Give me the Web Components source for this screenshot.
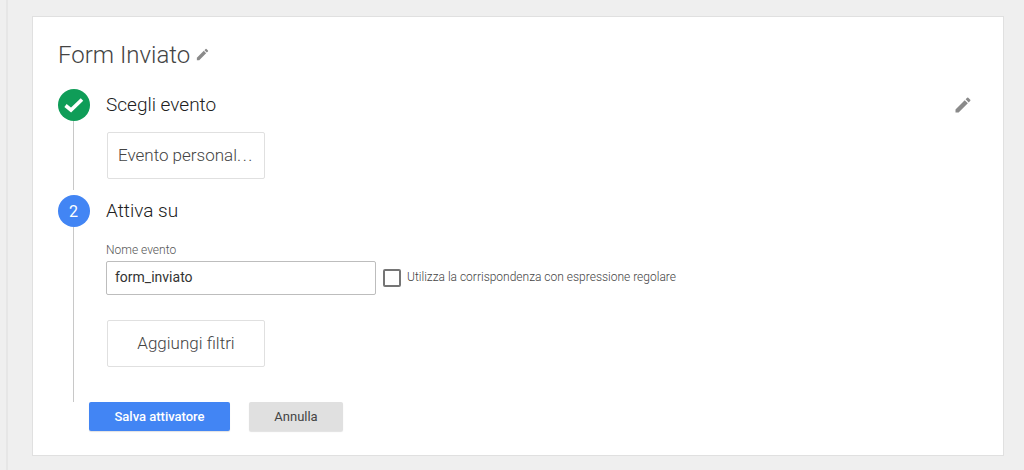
<!DOCTYPE html>
<html>
<head>
<meta charset="utf-8">
<style>
  html, body { margin: 0; height: 100%; background: #efefef; overflow: hidden; }
  body { font-family: Roboto, "Liberation Sans", sans-serif; }
</style>
</head>
<body>
<trigger-page>
  <trigger-step number="check" title="Scegli evento" editable>
    <chip-button>Evento personal<span style="letter-spacing:1.6px">...</span></chip-button>
  </trigger-step>
  <trigger-step number="2" title="Attiva su" last>
    <event-field></event-field>
    <chip-button class="filters">Aggiungi filtri</chip-button>
  </trigger-step>
</trigger-page>

<script>
const PENCIL = `<svg viewBox="0 0 24 24"><path fill="currentColor" d="M3 17.25V21h3.75L17.81 9.94l-3.75-3.75L3 17.25zM20.71 7.04a1 1 0 0 0 0-1.41l-2.34-2.34a1 1 0 0 0-1.41 0l-1.83 1.83 3.75 3.75 1.83-1.83z"/></svg>`;

class TriggerPage extends HTMLElement {
    connectedCallback() {
        this.attachShadow({ mode: 'open' });
        this.shadowRoot.innerHTML = `
            <style>
                :host {
                    display: block; height: 470px; box-sizing: border-box; padding: 16px 20px 14px 32px;
                    background: linear-gradient(#e6e6e6, #e6e6e6) 6px 0 / 2px 100% no-repeat;
                }
                .card {
                    box-sizing: border-box; height: 440px; background: #fff;
                    border: 1px solid #e0e0e0; padding: 22px 25px 0 25px;
                }
                h1 {
                    margin: 0 0 18px; display: flex; align-items: center; gap: 5px; height: 32px;
                    font: 300 24px Roboto, sans-serif; color: #444;
                }
                h1 svg { width: 15px; height: 15px; color: #8a8a8a; margin-top: -1px; }
                .actions { display: flex; gap: 19px; margin-left: 31px; }
                .btn {
                    box-sizing: border-box; height: 29px; border-radius: 2px;
                    display: flex; align-items: center; justify-content: center;
                    font: 500 13px Roboto, sans-serif; box-shadow: 0 1px 1px rgba(0,0,0,.12);
                }
                .save { width: 141px; background: #4285f4; color: #fff; }
                .cancel { width: 94px; background: #e0e0e0; color: #444; font-weight: 400; }
            </style>
            <div class="card">
                <h1>Form Inviato ${PENCIL}</h1>
                <slot></slot>
                <div class="actions">
                    <div class="btn save">Salva attivatore</div>
                    <div class="btn cancel">Annulla</div>
                </div>
            </div>
        `;
    }
}
customElements.define('trigger-page', TriggerPage);

class TriggerStep extends HTMLElement {
    connectedCallback() {
        const num = this.getAttribute('number');
        const done = num === 'check';
        this.attachShadow({ mode: 'open' });
        this.shadowRoot.innerHTML = `
            <style>
                :host { display: grid; grid-template-columns: 32px 1fr; column-gap: 16px; }
                .rail { display: flex; flex-direction: column; }
                .badge {
                    width: 32px; height: 32px; border-radius: 50%; flex: none;
                    display: flex; align-items: center; justify-content: center;
                    color: #fff; font: 400 16px Roboto, sans-serif;
                    background: ${done ? '#0f9d58' : '#4285f4'};
                }
                .badge span { margin-right: 1px; }
                .badge svg { width: 32px; height: 32px; }
                .line { flex: 1; width: 1px; background: #c8c8c8; margin: ${done ? '0 0 5px 15px' : '0 0 0 15px'}; }
                .head {
                    box-sizing: border-box; height: 32px; padding-bottom: 2px;
                    display: flex; align-items: center; justify-content: space-between;
                    font: 300 19px Roboto, sans-serif; color: #212121;
                }
                .edit { display: flex; width: 20px; height: 20px; color: #8a8a8a; margin: 2px 5px 0 0; }
                .body { padding: ${done ? '11px 0 16px' : '15px 0 35px'}; }
            </style>
            <div class="rail">
                <div class="badge">${done ? '<svg viewBox="0 0 32 32"><path fill="none" stroke="currentColor" stroke-width="3.6" d="M7.5 16.5l5.5 4.5 11-10.5"/></svg>' : `<span>${num}</span>`}</div>
                <div class="line"></div>
            </div>
            <div>
                <div class="head"><span>${this.getAttribute('title')}</span>${this.hasAttribute('editable') ? `<span class="edit">${PENCIL}</span>` : ''}</div>
                <div class="body"><slot></slot></div>
            </div>
        `;
    }
}
customElements.define('trigger-step', TriggerStep);

class ChipButton extends HTMLElement {
    connectedCallback() {
        this.attachShadow({ mode: 'open' });
        this.shadowRoot.innerHTML = `
            <style>
                :host {
                    display: flex; align-items: center; justify-content: center; box-sizing: border-box;
                    width: 158px; height: 47px; margin-left: 1px; padding-bottom: 2px;
                    border: 1px solid #e0e0e0; border-radius: 2px; background: #fff;
                    font: 300 17px Roboto, sans-serif; color: #444; white-space: nowrap;
                }
                :host(.filters) { margin-top: 25px; }
            </style>
            <span><slot></slot></span>
        `;
    }
}
customElements.define('chip-button', ChipButton);

class EventField extends HTMLElement {
    connectedCallback() {
        this.attachShadow({ mode: 'open' });
        this.shadowRoot.innerHTML = `
            <style>
                :host { display: block; }
                label { display: block; padding-top: 1px; font: 300 12px/14px Roboto, sans-serif; color: #555; margin-bottom: 4px; }
                .row { display: flex; align-items: center; }
                .input {
                    box-sizing: border-box; width: 270px; height: 34px; padding: 0 8px 2px;
                    display: flex; align-items: center;
                    border: 1px solid #bdbdbd; border-radius: 2px;
                    font: 400 14px Roboto, sans-serif; color: #333;
                }
                .box {
                    box-sizing: border-box; width: 18px; height: 18px; margin: 0 6px 0 7px;
                    border: 2px solid #757575; border-radius: 2px;
                }
                .check-label { font: 300 12px Roboto, sans-serif; color: #444; margin-bottom: 2px; }
            </style>
            <label>Nome evento</label>
            <div class="row">
                <div class="input">form_inviato</div>
                <div class="box"></div>
                <span class="check-label">Utilizza la corrispondenza con espressione regolare</span>
            </div>
        `;
    }
}
customElements.define('event-field', EventField);
</script>
</body>
</html>
